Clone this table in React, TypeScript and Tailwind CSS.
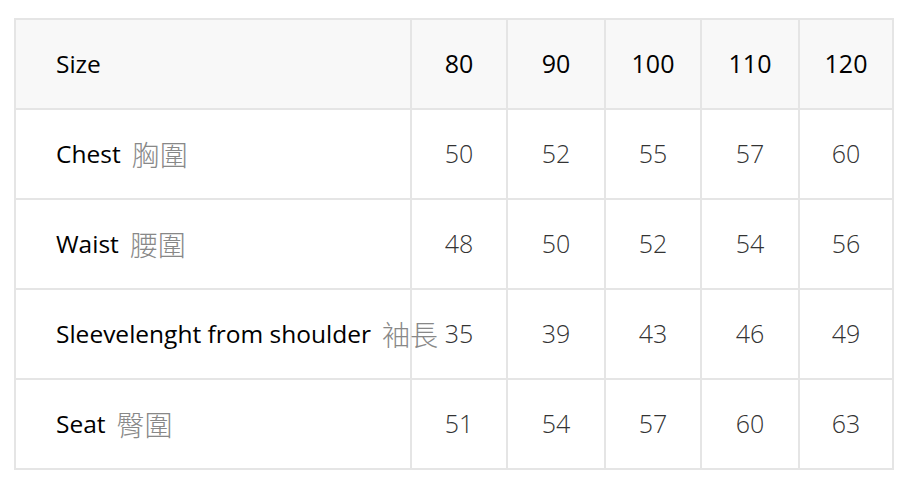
import React from "react";

const headers = ["80", "90", "100", "110", "120"];
const rows: { en: string; zh: string; vals: string[] }[] = [
  { en: "Chest", zh: "胸圍", vals: ["50", "52", "55", "57", "60"] },
  { en: "Waist", zh: "腰圍", vals: ["48", "50", "52", "54", "56"] },
  { en: "Sleevelenght from shoulder", zh: "袖長", vals: ["35", "39", "43", "46", "49"] },
  { en: "Seat", zh: "臀圍", vals: ["51", "54", "57", "60", "63"] },
];

const colW = ["w-[396px]", "w-[96px]", "w-[98px]", "w-[96px]", "w-[98px]", "w-[94px]"];

export default function App() {
  return (
    <div className="w-[916px] h-[496px] bg-white pt-[18px] pl-[14px] font-['Open_Sans','Noto_Sans_CJK_TC',sans-serif]">
      <div className="inline-flex flex-col border-l-2 border-t-2 border-[#e5e5e5]">
        <div className="flex h-[90px] bg-[#f8f8f8]">
          <div className={`${colW[0]} flex items-center pl-[40px] border-r-2 border-b-2 border-[#e5e5e5] text-[24.5px] text-black`}>
            Size
          </div>
          {headers.map((h, i) => (
            <div
              key={h}
              className={`${colW[i + 1]} flex items-center justify-center border-r-2 border-b-2 border-[#e5e5e5] text-[25px] text-black`}
            >
              {h}
            </div>
          ))}
        </div>
        {rows.map((r) => (
          <div key={r.en} className="flex h-[90px] bg-white">
            <div className={`${colW[0]} flex items-center pl-[40px] border-r-2 border-b-2 border-[#e5e5e5] text-[24.5px] text-black whitespace-nowrap`}>
              <span>{r.en}</span>
              <span className="ml-[11px] text-[#888] text-[28px] font-light font-['Noto_Sans_CJK_TC',sans-serif]">{r.zh}</span>
            </div>
            {r.vals.map((v, i) => (
              <div
                key={i}
                className={`${colW[i + 1]} flex items-center justify-center border-r-2 border-b-2 border-[#e5e5e5] text-[25px] font-light text-[#333]`}
              >
                {v}
              </div>
            ))}
          </div>
        ))}
      </div>
    </div>
  );
}
